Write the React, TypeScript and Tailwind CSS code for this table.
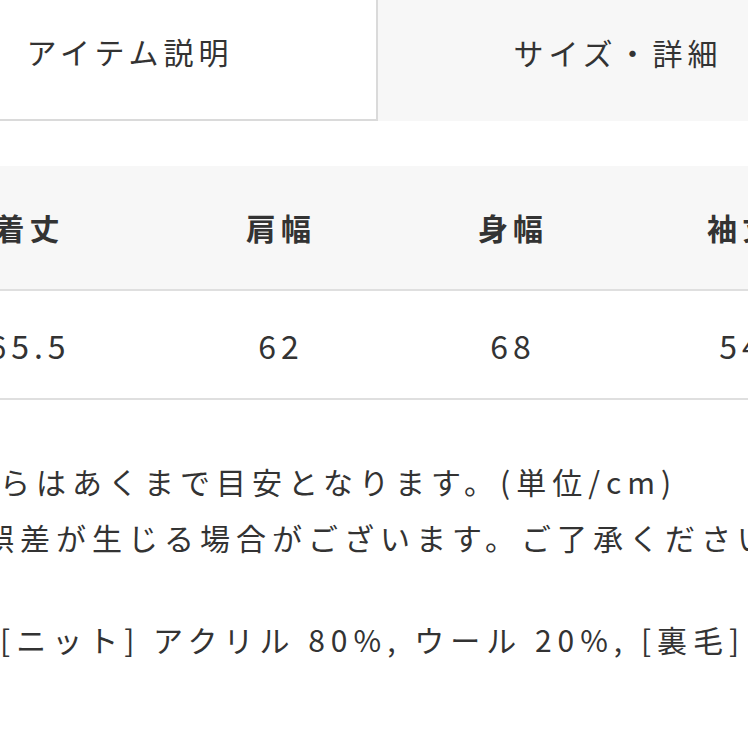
import React from 'react';

const cols = [
  { label: '着丈', value: '65.5', w: 'w-[281px] pl-[10px]' },
  { label: '肩幅', value: '62', w: 'w-[232px]' },
  { label: '身幅', value: '68', w: 'w-[232px]' },
  { label: '袖丈', value: '54', w: 'w-[226px]' },
];

export default function App() {
  return (
    <div className="h-[748px] w-full overflow-hidden bg-white font-['Noto_Sans_CJK_JP','Noto_Sans',sans-serif] text-[#333333]">
      <div className="-ml-[116px] w-[984px]">
        {/* tabs */}
        <div className="flex">
          <div className="flex h-[121px] w-[494px] items-center justify-center border-r-2 border-b-2 border-[#dadada] bg-white pb-[16px] text-[30px] tracking-[5px]">
            アイテム説明
          </div>
          <div className="flex h-[121px] w-[480px] items-center justify-center bg-[#f7f7f7] pb-[16px] text-[30px] tracking-[5px]">
            サイズ・詳細
          </div>
        </div>

        {/* size table */}
        <div className="mt-[45px]">
          <div className="flex h-[125px] border-b-2 border-[#dfdfdf] bg-[#f7f7f7]">
            {cols.map((c) => (
              <div key={c.label} className={`${c.w} flex items-center justify-center text-[30px] font-bold tracking-[5px]`}>
                {c.label}
              </div>
            ))}
          </div>
          <div className="flex h-[109px] border-b-2 border-[#dfdfdf]">
            {cols.map((c) => (
              <div key={c.label} className={`${c.w} flex items-center justify-center text-[32px] tracking-[5px]`}>
                {c.value}
              </div>
            ))}
          </div>
        </div>
      </div>

      {/* notes */}
      <div className="mt-[53px] whitespace-nowrap text-[30px] leading-[56px] tracking-[6px]">
        <p>らはあくまで目安となります。(単位/cm)</p>
        <p className="-ml-[16px]">誤差が生じる場合がございます。ご了承ください。</p>
        <p className="mt-[46px]">[ニット] アクリル 80%, ウール 20%, [裏毛]</p>
      </div>
    </div>
  );
}
